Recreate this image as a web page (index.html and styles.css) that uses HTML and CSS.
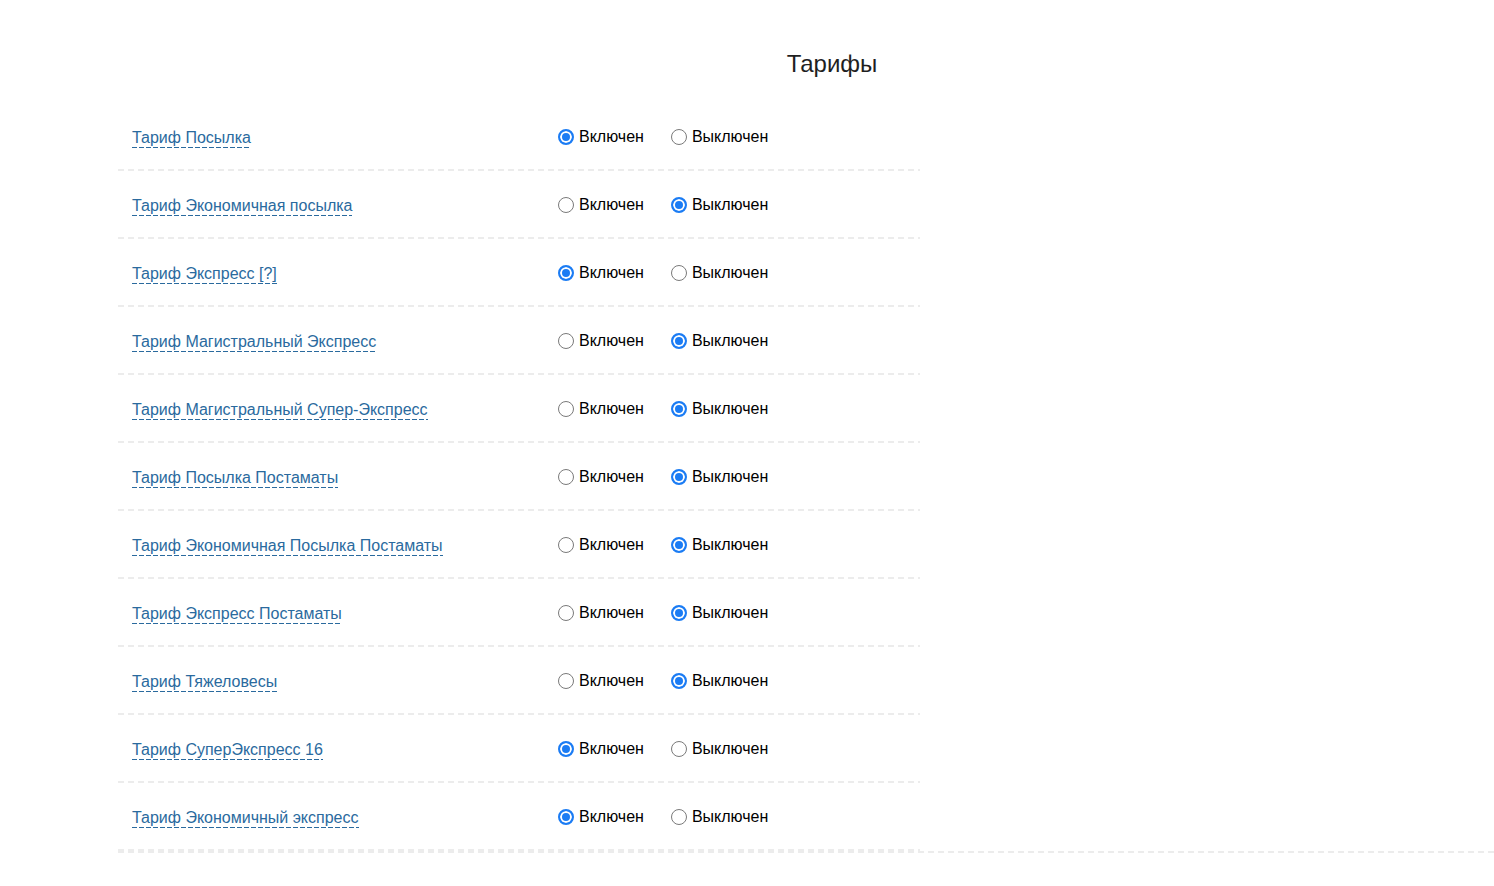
FILE: index.html
```html
<!DOCTYPE html>
<html lang="ru">
<head>
<meta charset="utf-8">
<title>Тарифы</title>
<link rel="stylesheet" href="styles.css">
</head>
<body>
<h2 class="title">Тарифы</h2>
<div class="tariffs">
  <div class="row">
    <div class="name"><a class="link" href="#">Тариф Посылка</a></div>
    <div class="opts">
      <label class="opt"><input type="radio" name="t1" checked><span>Включен</span></label>
      <label class="opt"><input type="radio" name="t1"><span>Выключен</span></label>
    </div>
  </div>
  <div class="row">
    <div class="name"><a class="link" href="#">Тариф Экономичная посылка</a></div>
    <div class="opts">
      <label class="opt"><input type="radio" name="t2"><span>Включен</span></label>
      <label class="opt"><input type="radio" name="t2" checked><span>Выключен</span></label>
    </div>
  </div>
  <div class="row">
    <div class="name"><a class="link" href="#">Тариф Экспресс [?]</a></div>
    <div class="opts">
      <label class="opt"><input type="radio" name="t3" checked><span>Включен</span></label>
      <label class="opt"><input type="radio" name="t3"><span>Выключен</span></label>
    </div>
  </div>
  <div class="row">
    <div class="name"><a class="link" href="#">Тариф Магистральный Экспресс</a></div>
    <div class="opts">
      <label class="opt"><input type="radio" name="t4"><span>Включен</span></label>
      <label class="opt"><input type="radio" name="t4" checked><span>Выключен</span></label>
    </div>
  </div>
  <div class="row">
    <div class="name"><a class="link" href="#">Тариф Магистральный Супер-Экспресс</a></div>
    <div class="opts">
      <label class="opt"><input type="radio" name="t5"><span>Включен</span></label>
      <label class="opt"><input type="radio" name="t5" checked><span>Выключен</span></label>
    </div>
  </div>
  <div class="row">
    <div class="name"><a class="link" href="#">Тариф Посылка Постаматы</a></div>
    <div class="opts">
      <label class="opt"><input type="radio" name="t6"><span>Включен</span></label>
      <label class="opt"><input type="radio" name="t6" checked><span>Выключен</span></label>
    </div>
  </div>
  <div class="row">
    <div class="name"><a class="link" href="#">Тариф Экономичная Посылка Постаматы</a></div>
    <div class="opts">
      <label class="opt"><input type="radio" name="t7"><span>Включен</span></label>
      <label class="opt"><input type="radio" name="t7" checked><span>Выключен</span></label>
    </div>
  </div>
  <div class="row">
    <div class="name"><a class="link" href="#">Тариф Экспресс Постаматы</a></div>
    <div class="opts">
      <label class="opt"><input type="radio" name="t8"><span>Включен</span></label>
      <label class="opt"><input type="radio" name="t8" checked><span>Выключен</span></label>
    </div>
  </div>
  <div class="row">
    <div class="name"><a class="link" href="#">Тариф Тяжеловесы</a></div>
    <div class="opts">
      <label class="opt"><input type="radio" name="t9"><span>Включен</span></label>
      <label class="opt"><input type="radio" name="t9" checked><span>Выключен</span></label>
    </div>
  </div>
  <div class="row">
    <div class="name"><a class="link" href="#">Тариф СуперЭкспресс 16</a></div>
    <div class="opts">
      <label class="opt"><input type="radio" name="t10" checked><span>Включен</span></label>
      <label class="opt"><input type="radio" name="t10"><span>Выключен</span></label>
    </div>
  </div>
  <div class="row">
    <div class="name"><a class="link" href="#">Тариф Экономичный экспресс</a></div>
    <div class="opts">
      <label class="opt"><input type="radio" name="t11" checked><span>Включен</span></label>
      <label class="opt"><input type="radio" name="t11"><span>Выключен</span></label>
    </div>
  </div>
</div>
<div class="footer-line"></div>
</body>
</html>
```

FILE: styles.css
```css
html, body {
  margin: 0;
  padding: 0;
  background: #fff;
}
body {
  font-family: "Liberation Sans", Arial, Helvetica, sans-serif;
  font-size: 16px;
  color: #000;
}
.title {
  margin: 0;
  padding: 50px 0 25px 170px;
  line-height: 28px;
  font-size: 24px;
  font-weight: normal;
  color: #1f1f1f;
  text-align: center;
}
.tariffs {
  margin-left: 118px;
  width: 802px;
}
.row {
  display: grid;
  grid-template-columns: 440px 1fr;
  align-items: center;
  height: 68px;
  background-image: repeating-linear-gradient(90deg, #ececec 0 6px, transparent 6px 10px);
  background-size: 100% 2px;
  background-position: left bottom;
  background-repeat: no-repeat;
}
.name {
  padding-left: 14px;
  padding-top: 2px;
}
.link {
  color: #2a6a9e;
  text-decoration: none;
  padding-bottom: 2px;
  background-image: repeating-linear-gradient(90deg, #2a6a9e 0 5px, transparent 5px 7px);
  background-size: 100% 1px;
  background-position: left bottom;
  background-repeat: no-repeat;
}
.opts {
  display: flex;
  align-items: center;
}
.opt {
  display: flex;
  align-items: center;
  gap: 5px;
  margin-right: 27px;
  color: #000;
}
.opt input {
  -webkit-appearance: none;
  appearance: none;
  margin: 0;
  width: 16px;
  height: 16px;
  border-radius: 50%;
  border: 1px solid #7a7a7a;
  background: #fff;
  box-sizing: border-box;
}
.opt input:checked {
  border: 2px solid #1b7cf4;
  background: #1b7cf4;
  box-shadow: inset 0 0 0 2px #fff;
}
.footer-line {
  margin-left: 118px;
  height: 2px;
  background-image: repeating-linear-gradient(90deg, #ececec 0 6px, transparent 6px 10px);
}
```
